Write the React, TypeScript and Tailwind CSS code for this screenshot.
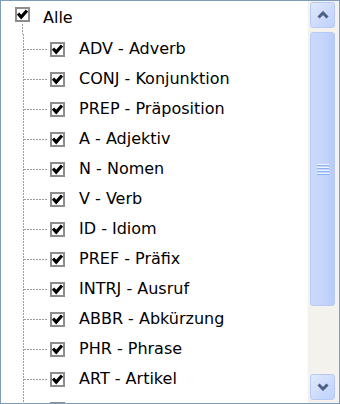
import React from "react";

const items = [
  "ADV - Adverb",
  "CONJ - Konjunktion",
  "PREP - Präposition",
  "A - Adjektiv",
  "N - Nomen",
  "V - Verb",
  "ID - Idiom",
  "PREF - Präfix",
  "INTRJ - Ausruf",
  "ABBR - Abkürzung",
  "PHR - Phrase",
  "ART - Artikel",
  "",
];

function Check({ checked = true }: { checked?: boolean }) {
  return (
    <div className="w-[15px] h-[15px] border-2 border-[#8d8d8d] bg-white flex items-center justify-center shrink-0">
      {checked && (
        <svg width="11" height="11" viewBox="0 0 11 11">
          <path d="M1 4.5 L4.2 8 L10 1.5" stroke="#000" strokeWidth="3.2" fill="none" strokeLinejoin="miter" />
        </svg>
      )}
    </div>
  );
}

function Connector({ last }: { last?: boolean }) {
  return (
    <svg width="35" height="30" className="shrink-0">
      <line x1="8.5" y1="0" x2="8.5" y2={last ? 15 : 30} stroke="#9c9c9c" strokeWidth="1" strokeDasharray="2 1" />
      <line x1="9" y1="15.5" x2="33" y2="15.5" stroke="#9c9c9c" strokeWidth="1" strokeDasharray="2 1" />
    </svg>
  );
}

function Arrow({ up }: { up: boolean }) {
  return (
    <svg width="12" height="8" viewBox="0 0 12 8">
      <path
        d={up ? "M1.5 6.5 L6 2 L10.5 6.5" : "M1.5 1.5 L6 6 L10.5 1.5"}
        stroke="#4d6185"
        strokeWidth="3"
        fill="none"
      />
    </svg>
  );
}

export default function App() {
  return (
    <div
      className="w-[340px] h-[404px] border border-[#7f9db9] bg-white flex overflow-hidden text-black"
      style={{ fontFamily: '"DejaVu Sans", sans-serif' }}
    >
      <div className="flex-1 flex flex-col pt-[3px] overflow-hidden">
        <div className="h-[30px] flex items-stretch pl-[14px] shrink-0">
          <div className="flex flex-col items-center w-[15px]">
            <div className="h-[8px]" />
            <Check />
            <div className="flex-1 w-full flex justify-center pt-[2px]">
              <svg width="1" height="10">
                <line x1="0.5" y1="0" x2="0.5" y2="10" stroke="#9c9c9c" strokeDasharray="2 1" />
              </svg>
            </div>
          </div>
          <span className="ml-[13px] text-[16px] leading-[30px] -mt-[1px]">Alle</span>
        </div>
        {items.map((t, i) => (
          <div key={i} className="h-[30px] flex items-center pl-[14px] shrink-0">
            <Connector />
            <Check />
            <span className="ml-[14px] text-[16px] leading-[30px]">{t}</span>
          </div>
        ))}
      </div>
      <div className="w-[32px] shrink-0 flex flex-col bg-[#f3f2ec] border-l border-[#fbfbf8] pl-[2px] pr-[4px]">
        <div className="mt-[1px] h-[26px] rounded-[3px] border border-[#b8cbf6] bg-gradient-to-br from-[#e0e9fe] to-[#bfd0fa] flex items-center justify-center">
          <Arrow up />
        </div>
        <div className="mt-[4px] h-[274px] rounded-[3px] border border-[#b8cbf6] bg-gradient-to-r from-[#c9d8fc] via-[#c6d5fc] to-[#b8cbf8] flex items-center justify-center">
          <div className="flex flex-col gap-[1px]">
            {[0, 1, 2, 3].map((k) => (
              <div key={k} className="w-[12px] h-[2px] bg-[#eef4fe] border-b border-[#8cb0f8]" />
            ))}
          </div>
        </div>
        <div className="flex-1" />
        <div className="mb-[3px] h-[26px] rounded-[3px] border border-[#b8cbf6] bg-gradient-to-br from-[#e0e9fe] to-[#bfd0fa] flex items-center justify-center">
          <Arrow up={false} />
        </div>
      </div>
    </div>
  );
}
